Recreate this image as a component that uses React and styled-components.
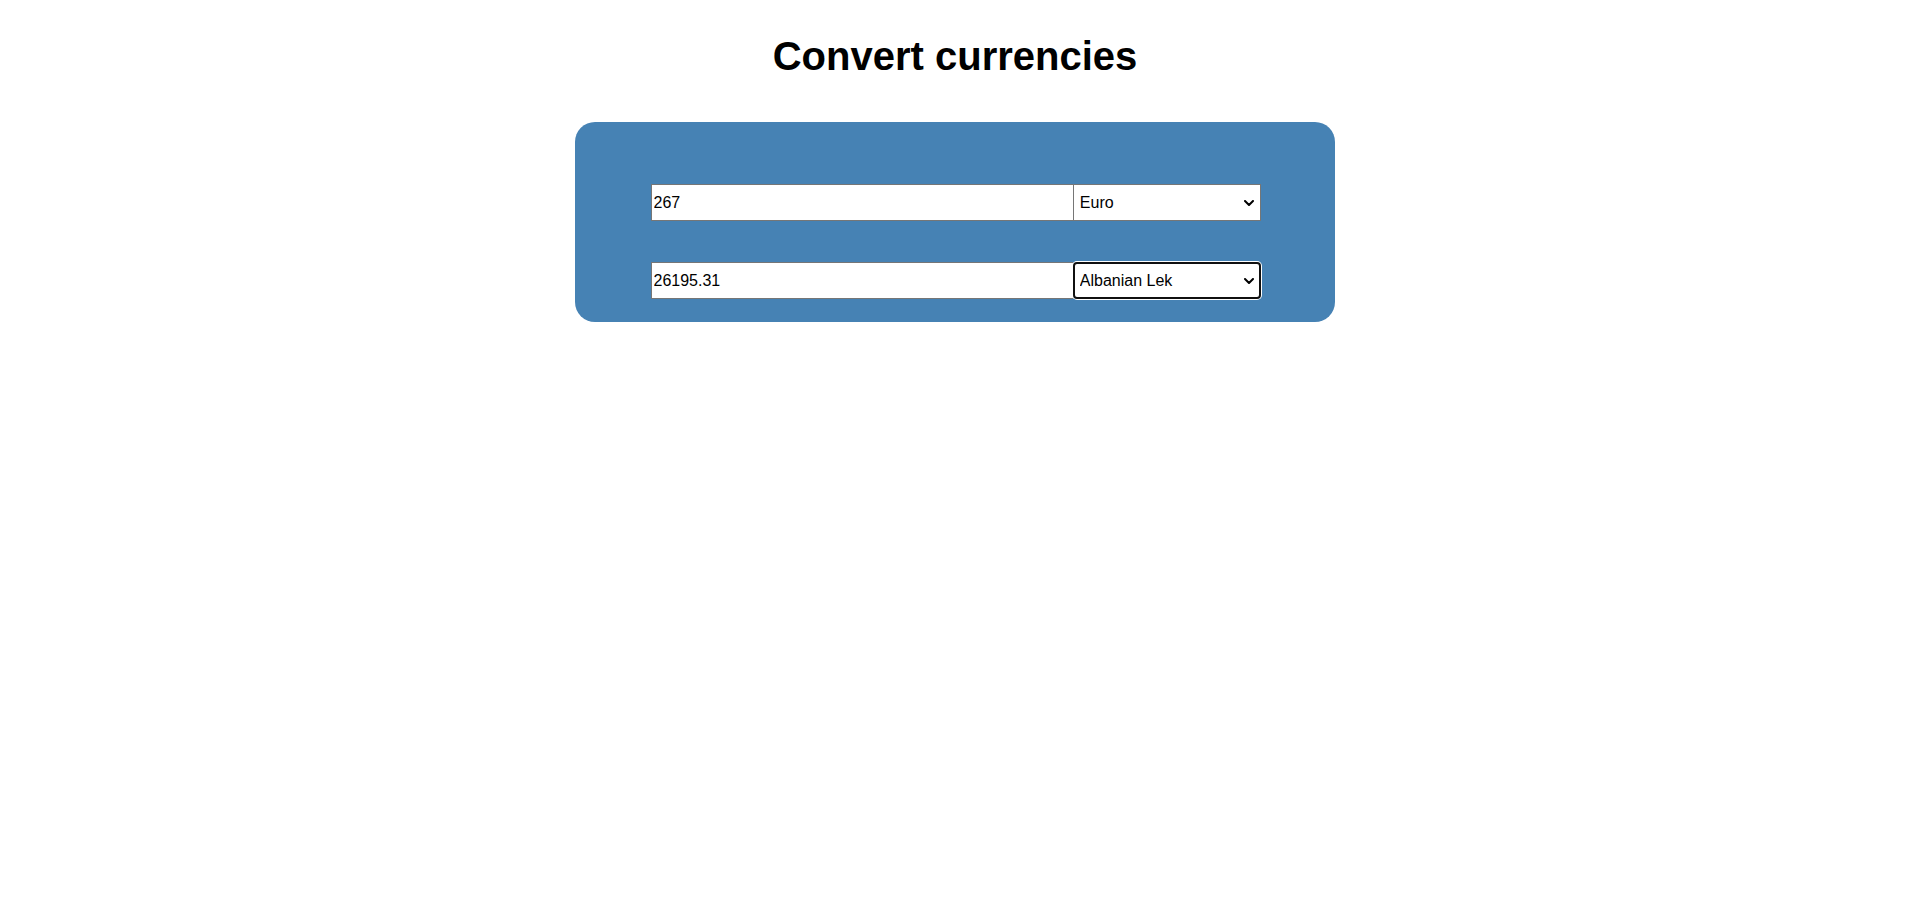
import React, { useState } from "react";
import styled, { createGlobalStyle } from "styled-components";

const GlobalStyle = createGlobalStyle`
  html, body {
    margin: 0;
    padding: 0;
    background: #ffffff;
  }
  body {
    font-family: "Liberation Sans", Arial, sans-serif;
    color: #000000;
  }
`;

const Page = styled.main`
  display: flex;
  flex-direction: column;
  align-items: center;
  padding: 33px 5px 0 0;
`;

const Title = styled.h1`
  margin: 0 0 43px;
  font-family: "Comic Sans MS", "Liberation Sans", sans-serif;
  font-size: 40px;
  line-height: 46px;
  font-weight: 700;
  color: #000000;
`;

const Panel = styled.section`
  box-sizing: border-box;
  width: 760px;
  height: 200px;
  padding: 62px 0 0 1px;
  background: steelblue;
  border-radius: 20px;
  display: flex;
  flex-direction: column;
  align-items: center;
  gap: 41px;
`;

const Row = styled.div`
  display: flex;
  width: 610px;
  height: 37px;
`;

const AmountInput = styled.input`
  box-sizing: border-box;
  width: 423px;
  height: 37px;
  margin: 0;
  padding: 1px 2px;
  border: 1px solid #767676;
  border-right: none;
  border-radius: 0;
  background: #ffffff;
  font-family: "Liberation Sans", Arial, sans-serif;
  font-size: 16px;
  color: #000000;
  outline: none;
`;

const SelectWrap = styled.div`
  position: relative;
  width: 188px;
  height: 37px;
`;

const CurrencySelect = styled.select`
  appearance: none;
  -webkit-appearance: none;
  box-sizing: border-box;
  width: 100%;
  height: 37px;
  margin: 0;
  padding: ${(p) => (p.$focused ? "0 24px 0 5px" : "0 24px 0 6px")};
  border: ${(p) => (p.$focused ? "2px solid #101010" : "1px solid #767676")};
  border-radius: ${(p) => (p.$focused ? "4px" : "0")};
  box-shadow: ${(p) => (p.$focused ? "0 0 0 1px #ffffff" : "none")};
  background-color: #ffffff;
  font-family: "Liberation Sans", Arial, sans-serif;
  font-size: 16px;
  color: #000000;
  outline: none;
`;

const Chevron = styled.svg`
  position: absolute;
  right: 7px;
  top: 50%;
  width: 10px;
  height: 6px;
  margin-top: -3px;
  pointer-events: none;
`;

const currencies = [
  "Euro",
  "Albanian Lek",
  "US Dollar",
  "British Pound",
  "Swiss Franc",
  "Japanese Yen",
];

function CurrencyPicker({ value, onChange, focused }) {
  return (
    <SelectWrap>
      <CurrencySelect $focused={focused} value={value} onChange={onChange}>
        {currencies.map((c) => (
          <option key={c} value={c}>
            {c}
          </option>
        ))}
      </CurrencySelect>
      <Chevron viewBox="0 0 10 6" aria-hidden="true">
        <path
          d="M1 1 L5 5 L9 1"
          fill="none"
          stroke="#000"
          strokeWidth="2"
          strokeLinecap="round"
          strokeLinejoin="round"
        />
      </Chevron>
    </SelectWrap>
  );
}

export default function App() {
  const [amount, setAmount] = useState("267");
  const [from, setFrom] = useState("Euro");
  const [to, setTo] = useState("Albanian Lek");

  return (
    <>
      <GlobalStyle />
      <Page>
        <Title>Convert currencies</Title>
        <Panel>
          <Row>
            <AmountInput
              type="text"
              value={amount}
              onChange={(e) => setAmount(e.target.value)}
            />
            <CurrencyPicker value={from} onChange={(e) => setFrom(e.target.value)} />
          </Row>
          <Row>
            <AmountInput type="text" value="26195.31" readOnly />
            <CurrencyPicker
              focused
              value={to}
              onChange={(e) => setTo(e.target.value)}
            />
          </Row>
        </Panel>
      </Page>
    </>
  );
}
